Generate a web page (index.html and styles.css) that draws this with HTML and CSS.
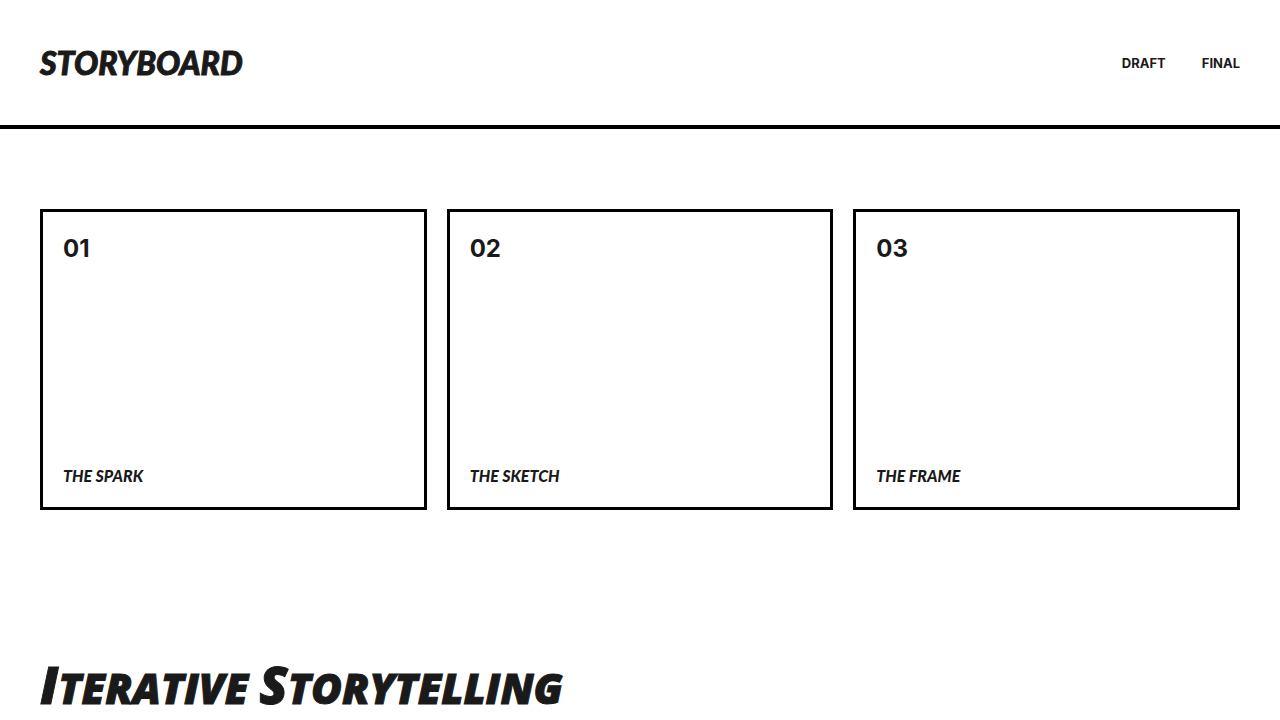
FILE: index.html
```
<!DOCTYPE html>
<html lang="en">
<head>
    <meta charset="UTF-8">
    <meta name="viewport" content="width=device-width, initial-scale=1.0">
    <title>Storyboard</title>
    <link rel="stylesheet" href="styles.css">
</head>
<body>

<header class="header">
    <div class="logo">STORYBOARD</div>
    <nav class="nav">
        <a href="#draft">DRAFT</a>
        <a href="#final">FINAL</a>
    </nav>
</header>

<main>
    <section class="frames">
        <div class="frame">
            <span class="frame-number">01</span>
            <p class="frame-caption">THE SPARK</p>
        </div>
        <div class="frame">
            <span class="frame-number">02</span>
            <p class="frame-caption">THE SKETCH</p>
        </div>
        <div class="frame">
            <span class="frame-number">03</span>
            <p class="frame-caption">THE FRAME</p>
        </div>
    </section>

    <section class="story">
        <h1><span class="cap">I</span>terative <span class="cap">S</span>torytelling</h1>
    </section>
</main>

</body>
</html>
```
FILE: styles.css
```
* {
    box-sizing: border-box;
    margin: 0;
    padding: 0;
}
body {
    background-color: #fff;
    color: #1a1a1a;
    font-family: Inter, "Liberation Sans", sans-serif;
}

/* Header */
.header {
    display: flex;
    justify-content: space-between;
    align-items: center;
    padding: 40px;
    border-bottom: 4px solid #000;
}
.logo {
    font-family: "Permanent Marker", Lato, cursive;
    font-size: 32px;
    font-style: italic;
    font-weight: 900;
    line-height: 45px;
    -webkit-text-stroke: 1px #1a1a1a;
}
.nav {
    display: flex;
    gap: 36px;
}
.nav a {
    color: inherit;
    font-size: 13px;
    font-weight: 700;
    text-decoration: none;
}

/* Storyboard frames */
.frames {
    display: grid;
    grid-template-columns: repeat(3, 1fr);
    gap: 20px;
    padding: 80px 40px;
}
.frame {
    display: flex;
    flex-direction: column;
    justify-content: space-between;
    min-height: 301px;
    padding: 20px;
    border: 3px solid #000;
}
.frame-number {
    font-size: 24px;
    font-weight: 700;
    line-height: 34px;
}
.frame-caption {
    font-family: "Permanent Marker", Lato, cursive;
    font-size: 16px;
    font-style: italic;
    font-weight: 900;
    line-height: 22px;
}

/* Story */
.story {
    padding: 60px 40px;
}
.story h1 {
    font-family: "Permanent Marker", "Open Sans", cursive;
    font-size: 42px;
    font-style: italic;
    font-weight: 800;
    line-height: 67px;
    text-transform: uppercase;
    -webkit-text-stroke: 1px #1a1a1a;
}
/* taller first letter of each word */
.cap {
    font-size: 52px;
}
```
